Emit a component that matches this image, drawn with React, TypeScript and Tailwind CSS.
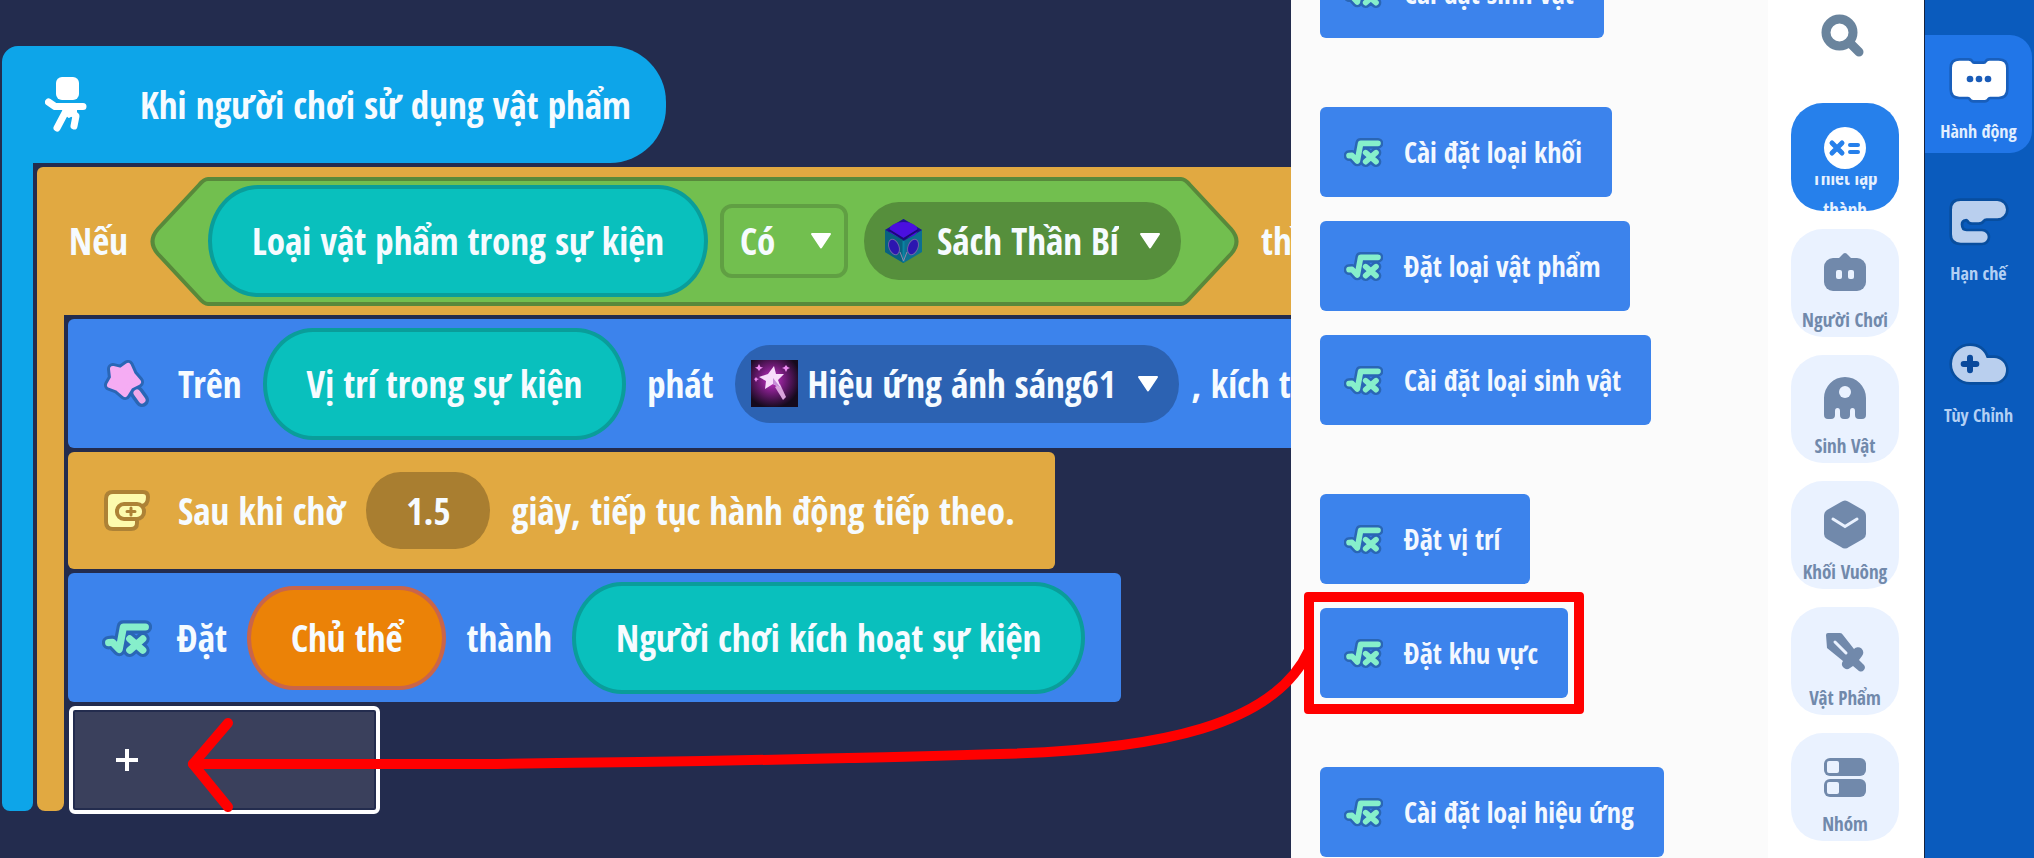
import type { ReactNode } from 'react';

/* ---------- drawings ---------- */

function RunnerIcon() {
  return (
    <svg viewBox="0 0 42 55" className="h-[55px] w-[42px] shrink-0" fill="none" stroke="#fff" strokeLinecap="round" strokeLinejoin="round" aria-hidden="true">
      <rect x="11" y="0" width="23" height="23" rx="6" fill="#fff" stroke="none" />
      <path d="M3.5 25 10 29.500H38" strokeWidth="7" />
      <path d="M18 29H31V36L24 40 19 36Z" fill="#fff" strokeWidth="2" />
      <path d="M21 34 12 51" strokeWidth="7" />
      <path d="M25 34 31 39 29 49" strokeWidth="7" />
    </svg>
  );
}

function RootIcon({ className }: { className: string }) {
  const root = 'M15 56 24 55 40 72 50 19H102';
  const cross = 'M65 47 96 74M96 47 65 74';
  return (
    <svg viewBox="0 0 117 90" className={className} fill="none" strokeLinecap="round" strokeLinejoin="round" aria-hidden="true">
      <path d={root} stroke="#2a66b5" strokeWidth="32" />
      <path d={cross} stroke="#2a66b5" strokeWidth="32" />
      <path d={root} stroke="#86efcb" strokeWidth="17" />
      <path d={cross} stroke="#86efcb" strokeWidth="17" />
    </svg>
  );
}

function WandIcon() {
  const star = 'M10 9 18 11 25 6 29 15 35 22 27 26 22 34 15 28 7 25 11 18Z';
  return (
    <svg viewBox="0 0 48 48" className="h-12 w-12" fill="none" strokeLinecap="round" strokeLinejoin="round" aria-hidden="true">
      <path d={star} stroke="#2a66b5" strokeWidth="12" />
      <path d="M34 33 39 40" stroke="#2a66b5" strokeWidth="14" />
      <path d={star} fill="#f5acf3" stroke="#f5acf3" strokeWidth="6" />
      <path d="M34 33 39 40" stroke="#f0a9ea" strokeWidth="7" />
    </svg>
  );
}

function WaitIcon() {
  return (
    <svg viewBox="0 0 48 44" className="h-11 w-12" strokeLinejoin="round" strokeLinecap="round" aria-hidden="true">
      <path d="M10 3H40Q45 3 45 8 45 16 39 17L34 30V34Q34 40 28 40H10Q3 40 3 33V10Q3 3 10 3Z" fill="#fdfbae" stroke="#ad8236" strokeWidth="4" />
      <rect x="14" y="15" width="27" height="15" rx="7" fill="#fdfbae" stroke="#ad8236" strokeWidth="4" />
      <path d="M24 22.500H32M28 19V26" stroke="#ad8236" strokeWidth="3" />
    </svg>
  );
}

function BookIcon() {
  return (
    <svg viewBox="0 0 39 44" className="mx-1 h-11 w-[39px]" aria-hidden="true">
      <path d="M19.500 0 38 11V33L19.500 44 1 33V11Z" fill="#0c6f92" />
      <path d="M19.500 0 38 11 19.500 22 1 11Z" fill="#22108f" />
      <ellipse cx="19.500" cy="11" rx="14" ry="8" fill="#4a0fe0" />
      <path d="M19.500 21V44L1 33V11Z" fill="#08617f" />
      <ellipse cx="10" cy="28" rx="5" ry="8" transform="rotate(-22 10 28)" fill="#2c16b0" stroke="#6f64a8" strokeWidth="1" />
      <ellipse cx="29" cy="28" rx="5" ry="8" transform="rotate(22 29 28)" fill="#2c16b0" stroke="#6f64a8" strokeWidth="1" />
      <path d="M5 11 19.500 20 34 11" fill="none" stroke="#1b0a78" strokeWidth="2" />
      <path d="M19.500 22V43" stroke="#0a84a3" strokeWidth="2" />
      <path d="M16 33 19.500 42 23 33" fill="none" stroke="#8f86a8" strokeWidth="1" />
    </svg>
  );
}

function SparkIcon() {
  return (
    <svg viewBox="0 0 47 47" className="size-[47px]" aria-hidden="true">
      <defs>
        <radialGradient id="spark-glow" cx="45%" cy="42%" r="60%">
          <stop offset="0" stopColor="#c632c9" />
          <stop offset="0.500" stopColor="#6d1a74" />
          <stop offset="1" stopColor="#150a1c" />
        </radialGradient>
      </defs>
      <rect width="47" height="47" fill="url(#spark-glow)" />
      <path d="M24 27 29 24 35 37 32 40Z" fill="#d9a3dc" />
      <path d="M23 6 25 14 33 14 27 20 30 28 22 24 14 29 15 21 8 17 17 14Z" fill="#f8dcfb" />
      <path d="M22 18 30 28 22 24Z" fill="#c68bd8" />
      <path d="M8 4 9.500 7 12 7.500 9.500 9 8 11 6.500 9 4 7.500 6.500 7ZM35 5 36.500 7 39 8 36.500 9 35 12 33.500 9 31 8 33.500 7ZM5 17 6 18.500 8 19 6 20 5 22 4 20 3 19 4 18.500Z" fill="#ee8cf2" />
    </svg>
  );
}

function Caret() {
  return (
    <svg viewBox="0 0 22 16" className="pointer-events-none h-4 w-[22px] shrink-0" aria-hidden="true">
      <path d="M2 1H20L11 14.500Z" fill="#fff" stroke="#fff" strokeWidth="2" strokeLinejoin="round" />
    </svg>
  );
}

function HexCap({ flip = false }: { flip?: boolean }) {
  return (
    <svg viewBox="0 0 58 129" className={flip ? 'h-[129px] w-[58px] shrink-0 -scale-x-100' : 'h-[129px] w-[58px] shrink-0'} aria-hidden="true">
      <path d="M58 2Q54 2 49 8L8 52Q-3 64.500 8 77L49 121Q54 127 58 127Z" fill="#72bf4f" />
      <path d="M58 2Q54 2 49 8L8 52Q-3 64.500 8 77L49 121Q54 127 58 127" fill="none" stroke="#58893b" strokeWidth="4" />
    </svg>
  );
}

/* ---------- block parts ---------- */

function Slot({ children, tone = 'teal' }: { children: ReactNode; tone?: 'teal' | 'orange' }) {
  return (
    <button
      type="button"
      className={
        tone === 'teal'
          ? 'h-28 shrink-0 rounded-[50px/56px] border-4 border-[#0a9d9a] bg-[#09c0bd] px-10'
          : 'h-[104px] shrink-0 rounded-[50px/56px] border-4 border-[#c9654a] bg-[#eb8207] px-10'
      }
    >
      {children}
    </button>
  );
}

function PickerPill({ icon, label, value, className }: { icon: ReactNode; label: string; value: string; className: string }) {
  return (
    <label className={`flex h-[78px] shrink-0 items-center rounded-[50px/56px] pr-5 pl-4 ${className}`}>
      {icon}
      <select aria-label={label} className="mr-5 ml-2.5 appearance-none bg-transparent outline-none">
        <option>{value}</option>
      </select>
      <Caret />
    </label>
  );
}

function Row({ icon, className, children }: { icon: ReactNode; className: string; children: ReactNode }) {
  return (
    <div className={`flex items-center rounded-md pl-[35px] ${className}`}>
      <span className="mr-1.5 flex w-12 shrink-0 justify-center">{icon}</span>
      {children}
    </div>
  );
}

function Workspace() {
  return (
    <main className="min-w-0 flex-1 overflow-hidden bg-[#232c4e] pt-[46px] pl-0.5 text-[37px] leading-[50px] whitespace-nowrap text-[#f6fbff]">
      <div className="flex h-[117px] w-fit items-center gap-[53px] rounded-l-[16px] rounded-r-[56px] rounded-bl-none bg-[#0da5e9] pr-[35px] pl-[43px]">
        <RunnerIcon />
        <span>Khi người chơi sử dụng vật phẩm</span>
      </div>

      <div className="flex gap-1">
        <div className="mb-[3px] w-[31px] shrink-0 rounded-b-lg bg-[#0da5e9]" />
        <div className="min-w-0 flex-1 pt-1">
          <div className="flex h-[148px] items-center gap-[22px] rounded-tl-md bg-[#e1a941] pl-8">
            <span>Nếu</span>
            <div className="flex shrink-0 items-center">
              <HexCap />
              <div className="flex h-[129px] items-center border-y-4 border-[#58893b] bg-[#72bf4f]">
                <Slot>Loại vật phẩm trong sự kiện</Slot>
                <label className="mr-4 ml-3 flex h-[74px] w-32 items-center justify-between rounded-xl border-4 border-[#609f43] pr-3 pl-4">
                  <select aria-label="Điều kiện" className="appearance-none bg-transparent outline-none">
                    <option>Có</option>
                  </select>
                  <Caret />
                </label>
                <PickerPill icon={<BookIcon />} label="Vật phẩm" value="Sách Thần Bí" className="bg-[#568f3c]" />
              </div>
              <HexCap flip />
            </div>
            <span>thì</span>
          </div>

          <div className="flex gap-1">
            <div className="mb-[3px] w-[27px] shrink-0 rounded-b-lg bg-[#e1a941]" />
            <div className="flex min-w-0 flex-1 flex-col items-start gap-1 pt-1">
              <Row icon={<WandIcon />} className="h-[129px] gap-[21px] bg-[#3c83ec]">
                <span>Trên</span>
                <Slot>Vị trí trong sự kiện</Slot>
                <span>phát</span>
                <PickerPill icon={<SparkIcon />} label="Hiệu ứng" value="Hiệu ứng ánh sáng61" className="bg-[#2c62b2]" />
                <span className="-ml-2">, kích thước</span>
              </Row>
              <Row icon={<WaitIcon />} className="h-[117px] gap-[21px] bg-[#e1a941] pr-10">
                <span>Sau khi chờ</span>
                <input
                  aria-label="Số giây"
                  defaultValue="1.5"
                  className="h-[77px] w-[124px] rounded-[50px/56px] bg-[#a97e30] text-center outline-none"
                />
                <span>giây, tiếp tục hành động tiếp theo.</span>
              </Row>
              <Row icon={<RootIcon className="h-[38px] w-[50px] shrink-0" />} className="h-[129px] gap-5 bg-[#3c83ec] pr-9">
                <span>Đặt</span>
                <Slot tone="orange">Chủ thể</Slot>
                <span>thành</span>
                <Slot>Người chơi kích hoạt sự kiện</Slot>
              </Row>
              <button type="button" aria-label="Thêm hành động" className="ml-px flex h-[108px] w-[311px] items-center rounded-md border-4 border-white p-0.5">
                <span className="flex h-full w-full items-center bg-[#3a405c] pl-[41px]">
                  <svg viewBox="0 0 22 22" className="size-[22px]" fill="none" stroke="#fff" strokeWidth="4" aria-hidden="true">
                    <path d="M11 0V22M0 11H22" />
                  </svg>
                </span>
              </button>
            </div>
          </div>
        </div>
      </div>
    </main>
  );
}

/* ---------- block palette ---------- */

const groups: string[][] = [
  ['Cài đặt sinh vật'],
  ['Cài đặt loại khối', 'Đặt loại vật phẩm', 'Cài đặt loại sinh vật'],
  ['Đặt vị trí', 'Đặt khu vực'],
  ['Cài đặt loại hiệu ứng'],
];

function Palette() {
  return (
    <section className="flex h-full w-[477px] shrink-0 flex-col items-start justify-end gap-[69px] overflow-hidden bg-[#fbfbfb] pb-px pl-[29px]">
      {groups.map((items) => (
        <ul key={items[0]} className="flex shrink-0 flex-col items-start gap-6">
          {items.map((item) => (
            <li key={item}>
              <button
                type="button"
                className="relative flex h-[90px] items-center gap-[21px] rounded-md bg-[#3c83ec] pr-[30px] pl-6 text-[28px] leading-10 whitespace-nowrap text-[#f3f8ff]"
              >
                <RootIcon className="h-[30px] w-[39px]" />
                {item}
                {item === 'Đặt khu vực' && <span className="absolute -inset-4 rounded border-[10px] border-[#ff0000]" />}
              </button>
            </li>
          ))}
        </ul>
      ))}
    </section>
  );
}

/* ---------- categories ---------- */

const categories: { name: string; icon: ReactNode }[] = [
  {
    name: 'Người Chơi',
    icon: (
      <>
        <path d="M12 10 18 4Q21 0 24 4L30 10Z" />
        <rect x="0" y="7" width="42" height="33" rx="9" />
        <rect x="12" y="19" width="6" height="9" rx="2" fill="#eaf2ff" />
        <rect x="24" y="19" width="6" height="9" rx="2" fill="#eaf2ff" />
      </>
    ),
  },
  {
    name: 'Sinh Vật',
    icon: (
      <>
        <path d="M0 21A21 21 0 0 1 42 21V38Q42 42 38 42H35Q31 42 31 38V34Q31 31 28.500 31 26 31 26 34V38Q26 42 22 42H20Q16 42 16 38V34Q16 31 13.500 31 11 31 11 34V38Q11 42 7 42H4Q0 42 0 38Z" />
        <circle cx="21" cy="15" r="6" fill="#eaf2ff" />
      </>
    ),
  },
  {
    name: 'Khối Vuông',
    icon: (
      <>
        <path d="M17 -1Q21 -4 25 -1L39 7Q42 9 42 13V31Q42 34 39 36L25 44Q21 47 17 44L3 36Q0 34 0 31V13Q0 9 3 7Z" />
        <path d="M9 16 21 23.500 33 16" fill="none" stroke="#eaf2ff" strokeWidth="3" strokeLinecap="round" />
      </>
    ),
  },
  {
    name: 'Vật Phẩm',
    icon: (
      <>
        <path d="M2 6Q2 4 4 4L16 4Q18 4 19 6L30 20A5 5 0 0 1 38 27L35 31 40 36A4 4 0 0 1 35 42L29 37 26 39A5 5 0 0 1 19 32L3 19Z" />
        <path d="M11 13 22 24" stroke="#eaf2ff" strokeWidth="3" strokeLinecap="round" />
      </>
    ),
  },
  {
    name: 'Nhóm',
    icon: (
      <>
        <rect x="0" y="3" width="42" height="18" rx="6" />
        <rect x="0" y="24" width="42" height="18" rx="6" />
        <rect x="3" y="6" width="12" height="12" rx="2" fill="#eaf2ff" />
        <rect x="3" y="27" width="12" height="12" rx="2" fill="#eaf2ff" />
      </>
    ),
  },
];

function CategoryBar() {
  return (
    <nav className="flex h-full w-[156px] shrink-0 flex-col items-center gap-[18px] overflow-hidden bg-white pt-3.5 pr-0.5 text-[19px] leading-6">
      <button type="button" aria-label="Tìm kiếm" className="mr-1.5 mb-7 shrink-0">
        <svg viewBox="0 0 43 43" className="size-[43px]" fill="none" stroke="#6a849d" strokeLinecap="round" aria-hidden="true">
          <circle cx="18.500" cy="18.500" r="13.500" strokeWidth="9" />
          <path d="M30 30 38 38" strokeWidth="9" />
        </svg>
      </button>
      <button type="button" className="flex size-[108px] shrink-0 flex-col items-center gap-[7px] overflow-hidden rounded-[32px] bg-[#2680eb] pt-6 text-[#e6f1ff]">
        <svg viewBox="0 0 42 42" className="size-[42px] shrink-0" fill="none" strokeLinecap="round" aria-hidden="true">
          <circle cx="21" cy="21" r="21" fill="#fff" />
          <path d="M8 16 18 26M18 16 8 26" stroke="#2680eb" strokeWidth="5" />
          <path d="M26 18H34M26 25H34" stroke="#2680eb" strokeWidth="4" />
        </svg>
        <span className="flex h-[35px] w-20 shrink-0 items-center justify-center overflow-hidden leading-8">
          <span className="shrink-0">
            Thiết lập
            <br />
            thành
          </span>
        </span>
      </button>
      {categories.map(({ name, icon }) => (
        <button key={name} type="button" className="flex size-[108px] shrink-0 flex-col items-center gap-[15px] rounded-[32px] bg-[#eaf2ff] pt-[22px] text-[#7189ab]">
          <svg viewBox="0 0 42 42" className="size-[42px] shrink-0 overflow-visible" fill="#7189ab" aria-hidden="true">
            {icon}
          </svg>
          {name}
        </button>
      ))}
    </nav>
  );
}

/* ---------- kind tabs ---------- */

const frame = 'M22 0H50Q56 0 58 5 60 10 66 10H96Q102 10 104 5 106 0 112 0H140Q162 0 162 22V86Q162 108 140 108H114Q108 108 106 113 104 118 98 118H64Q58 118 56 113 54 108 48 108H22Q0 108 0 86V22Q0 0 22 0Z';
const bracket = 'M26 0H136A26 26 0 0 1 136 52H104Q96 52 92 58 88 64 80 64H60Q52 64 50 58 46 52 40 54 26 56 26 70 26 91 44 91H90A17 17 0 0 1 90 125H26Q0 125 0 100V26Q0 0 26 0Z';
const cloud = 'M54 0Q92 0 104 36H126A36 36 0 0 1 126 108H54A54 54 0 0 1 54 0Z';

const tabs = [
  { name: 'Hành động', shape: frame, top: -8, active: true },
  { name: 'Hạn chế', shape: bracket, top: -3, active: false },
  { name: 'Tùy Chỉnh', shape: cloud, top: -12, active: false },
];

function TabBar() {
  return (
    <nav className="flex h-full w-[110px] shrink-0 flex-col gap-6 border-l border-[#16233f] bg-[#0a5bbd] pt-[35px] pr-0.5 text-[18px] leading-6">
      {tabs.map(({ name, shape, top, active }) => (
        <button
          key={name}
          type="button"
          className={
            active
              ? 'flex h-[118px] flex-col items-center gap-[17px] rounded-r-[22px] bg-[#2176e8] pt-[23px] text-[#e2efff]'
              : 'flex h-[118px] flex-col items-center gap-[17px] pt-[23px] text-[#b3d0f4]'
          }
        >
          <svg viewBox={`0 ${top} 162 132`} className="h-11 w-[54px] shrink-0 overflow-visible" aria-hidden="true">
            <path d={shape} fill={active ? '#fff' : '#b9cfee'} stroke={active ? '#195fbc' : '#084e9f'} strokeWidth="16" paintOrder="stroke" />
            {shape === frame && (
              <g fill="#1a5cb8">
                <circle cx="54" cy="55" r="10" />
                <circle cx="81" cy="55" r="10" />
                <circle cx="108" cy="55" r="10" />
              </g>
            )}
            {shape === cloud && <path d="M54 35V73M35 54H73" stroke="#0b4a9c" strokeWidth="18" strokeLinecap="round" />}
          </svg>
          {name}
        </button>
      ))}
    </nav>
  );
}

function DragArrow() {
  return (
    <svg viewBox="0 0 1310 858" className="pointer-events-none absolute top-0 left-0 h-[858px] w-[1310px]" fill="none" stroke="#ff0000" strokeWidth="10" strokeLinecap="round" strokeLinejoin="round" aria-hidden="true">
      <path d="M228 723 193 764 228 807" />
      <path d="M193 764H483Q770 761 1000 754C1160 750 1275 725 1309 650" />
    </svg>
  );
}

export default function App() {
  return (
    <div className="relative flex h-screen overflow-hidden bg-[#232c4e] font-['Open_Sans_Condensed','Open_Sans','Noto_Sans',sans-serif] font-bold">
      <Workspace />
      <Palette />
      <CategoryBar />
      <TabBar />
      <DragArrow />
    </div>
  );
}
